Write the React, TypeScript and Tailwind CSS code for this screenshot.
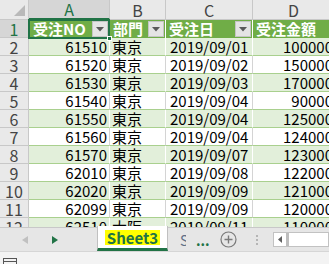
import React from 'react';

const rows = [
  { no: '61510', dept: '東京', date: '2019/09/01', amount: '100000' },
  { no: '61520', dept: '東京', date: '2019/09/02', amount: '150000' },
  { no: '61530', dept: '東京', date: '2019/09/03', amount: '170000' },
  { no: '61540', dept: '東京', date: '2019/09/04', amount: '90000' },
  { no: '61550', dept: '東京', date: '2019/09/04', amount: '125000' },
  { no: '61560', dept: '東京', date: '2019/09/04', amount: '124000' },
  { no: '61570', dept: '東京', date: '2019/09/07', amount: '123000' },
  { no: '62010', dept: '東京', date: '2019/09/08', amount: '122000' },
  { no: '62020', dept: '東京', date: '2019/09/09', amount: '121000' },
  { no: '62099', dept: '東京', date: '2019/09/09', amount: '120000' },
  { no: '62510', dept: '大阪', date: '2019/09/11', amount: '110000' },
];

const font = { fontFamily: '"Noto Sans CJK JP", "Liberation Sans", sans-serif' };

function FilterButton() {
  return (
    <div className="ml-auto mr-[1px] flex h-[16px] w-[16px] shrink-0 items-center justify-center border border-[#c4c4c4] bg-[#e4e4e4]">
      <svg width="8" height="5" viewBox="0 0 8 5">
        <path d="M0 0 L8 0 L4 4.5 Z" fill="#595959" />
      </svg>
    </div>
  );
}

function ColHeader({ label, width, active }: { label: string; width: string; active?: boolean }) {
  return (
    <div
      className={`${width} flex h-full shrink-0 items-center justify-center border-r border-b border-[#c8c8c8] text-[16px] leading-[20px] ${
        active ? 'bg-[#d6d6d6] text-[#217346] border-b-[#217346] border-b-2' : 'bg-[#e9e9e9] text-[#444]'
      }`}
    >
      {label}
    </div>
  );
}

export default function App() {
  return (
    <div className="relative h-[264px] w-[329px] overflow-hidden bg-white" style={font}>
      {/* sheet grid */}
      <div className="h-[227px] overflow-hidden">
        {/* column letters */}
        <div className="flex h-[20px]">
          <div className="relative h-full w-[29px] shrink-0 border-r border-b border-[#c8c8c8] bg-[#e9e9e9]">
            <svg className="absolute right-[3px] bottom-[3px]" width="11" height="11" viewBox="0 0 11 11">
              <path d="M11 0 L11 11 L0 11 Z" fill="#b9b9b9" />
            </svg>
          </div>
          <ColHeader label="A" width="w-[81px]" active />
          <ColHeader label="B" width="w-[56px]" />
          <ColHeader label="C" width="w-[87px]" />
          <ColHeader label="D" width="w-[82px]" />
        </div>

        {/* table header row */}
        <div className="flex h-[18px] text-[15px] font-bold leading-[18px] text-white">
          <div className="flex h-full w-[29px] shrink-0 items-center justify-center border-r border-b border-[#c8c8c8] bg-[#d6d6d6] text-[16px] font-normal text-[#217346]">
            1
          </div>
          <div className="relative flex h-full w-[81px] shrink-0 items-center border-r border-white bg-[#70ad47] pl-[4px]">
            受注NO
            <FilterButton />
            <div className="pointer-events-none absolute -top-[1px] -left-[1px] -right-[1px] -bottom-[1px] border-2 border-[#217346]" />
            <div className="absolute -right-[3px] -bottom-[3px] h-[5px] w-[5px] border border-white bg-[#217346]" />
          </div>
          <div className="flex h-full w-[56px] shrink-0 items-center border-r border-white bg-[#70ad47] pl-[3px]">
            部門
            <FilterButton />
          </div>
          <div className="flex h-full w-[87px] shrink-0 items-center border-r border-white bg-[#70ad47] pl-[3px]">
            受注日
            <FilterButton />
          </div>
          <div className="flex h-full w-[82px] shrink-0 items-center bg-[#70ad47] pl-[3px]">
            受注金額
          </div>
        </div>

        {/* data rows */}
        {rows.map((r, i) => {
          const banded = i % 2 === 0;
          const cell = banded ? 'bg-[#e2efda] border-r border-white' : 'bg-white border-r border-[#d4d4d4]';
          return (
            <div key={r.no} className="flex h-[18px] text-[15px] leading-[18px] text-black">
              <div className="flex h-full w-[29px] shrink-0 items-center justify-center border-r border-b border-[#c8c8c8] bg-[#e9e9e9] text-[16px] text-[#444]">
                {i + 2}
              </div>
              <div className={`flex h-full w-[81px] shrink-0 items-center justify-end border-b border-b-[#a9d08e] pr-[2px] ${cell}`}>
                {r.no}
              </div>
              <div className={`flex h-full w-[56px] shrink-0 items-center border-b border-b-[#a9d08e] pl-[2px] ${cell}`}>
                {r.dept}
              </div>
              <div className={`flex h-full w-[87px] shrink-0 items-center border-b border-b-[#a9d08e] pl-[4px] ${cell}`}>
                {r.date}
              </div>
              <div className={`flex h-full w-[82px] shrink-0 items-center justify-end border-b border-b-[#a9d08e] pr-[2px] ${banded ? 'bg-[#e2efda]' : 'bg-white'}`}>
                {r.amount}
              </div>
            </div>
          );
        })}
      </div>

      {/* sheet tabs */}
      <div className="flex h-[24px] items-stretch border-t border-[#c8c8c8] bg-[#e6e6e6]">
        <div className="flex w-[97px] shrink-0 items-center pl-[22px]">
          <svg width="6" height="8" viewBox="0 0 6 8">
            <path d="M6 0 L6 8 L0 4 Z" fill="#c0c0c0" />
          </svg>
          <svg className="ml-[24px]" width="6" height="8" viewBox="0 0 6 8">
            <path d="M0 0 L0 8 L6 4 Z" fill="#217346" />
          </svg>
        </div>
        <div className="-mt-[2px] flex w-[71px] shrink-0 items-center justify-center border-x border-[#c0c0c0] border-b-[3px] border-b-[#217346] bg-white">
          <span className="bg-[#ffff00] px-[2px] text-[15px] font-bold leading-[15px] text-[#217346]">Sheet3</span>
        </div>
        <div className="w-[12px] shrink-0" />
        <div className="flex w-[6px] shrink-0 items-center overflow-hidden text-[14px] leading-[16px] text-[#5f6f86]">
          S
        </div>
        <div className="w-[10px] shrink-0" />
        <div className="flex w-[24px] shrink-0 items-center overflow-hidden text-[14px] font-bold leading-[16px] text-[#217346]">
          ...
        </div>
        <div className="flex w-[17px] shrink-0 items-center">
          <svg width="17" height="17" viewBox="0 0 17 17">
            <circle cx="8.5" cy="8.5" r="7.5" fill="none" stroke="#7a7a7a" strokeWidth="1.2" />
            <path d="M8.5 4.5 V12.5 M4.5 8.5 H12.5" stroke="#7a7a7a" strokeWidth="1.4" />
          </svg>
        </div>
        <div className="w-[19px] shrink-0" />
        <div className="flex w-[2px] shrink-0 flex-col items-center justify-center gap-[2px]">
          <div className="h-[2px] w-[2px] bg-[#b5b5b5]" />
          <div className="h-[2px] w-[2px] bg-[#b5b5b5]" />
          <div className="h-[2px] w-[2px] bg-[#b5b5b5]" />
        </div>
        <div className="w-[15px] shrink-0" />
        <div className="flex flex-1 items-center">
          <div className="flex h-[15px] w-full border border-[#c2c2c2] bg-white">
            <div className="flex w-[15px] items-center justify-center border-r-[3px] border-[#bdbdbd]">
              <svg width="4" height="7" viewBox="0 0 4 7">
                <path d="M4 0 L4 7 L0 3.5 Z" fill="#606060" />
              </svg>
            </div>
          </div>
        </div>
      </div>

      {/* status bar */}
      <div className="h-[13px] border-t border-[#d6d6d6] bg-[#f3f3f3] pl-[3px] pt-[6px]">
        <div className="h-[10px] w-[14px] border border-[#555]">
          <div className="mt-[2px] h-[1px] w-full bg-[#555]" />
        </div>
      </div>
    </div>
  );
}
